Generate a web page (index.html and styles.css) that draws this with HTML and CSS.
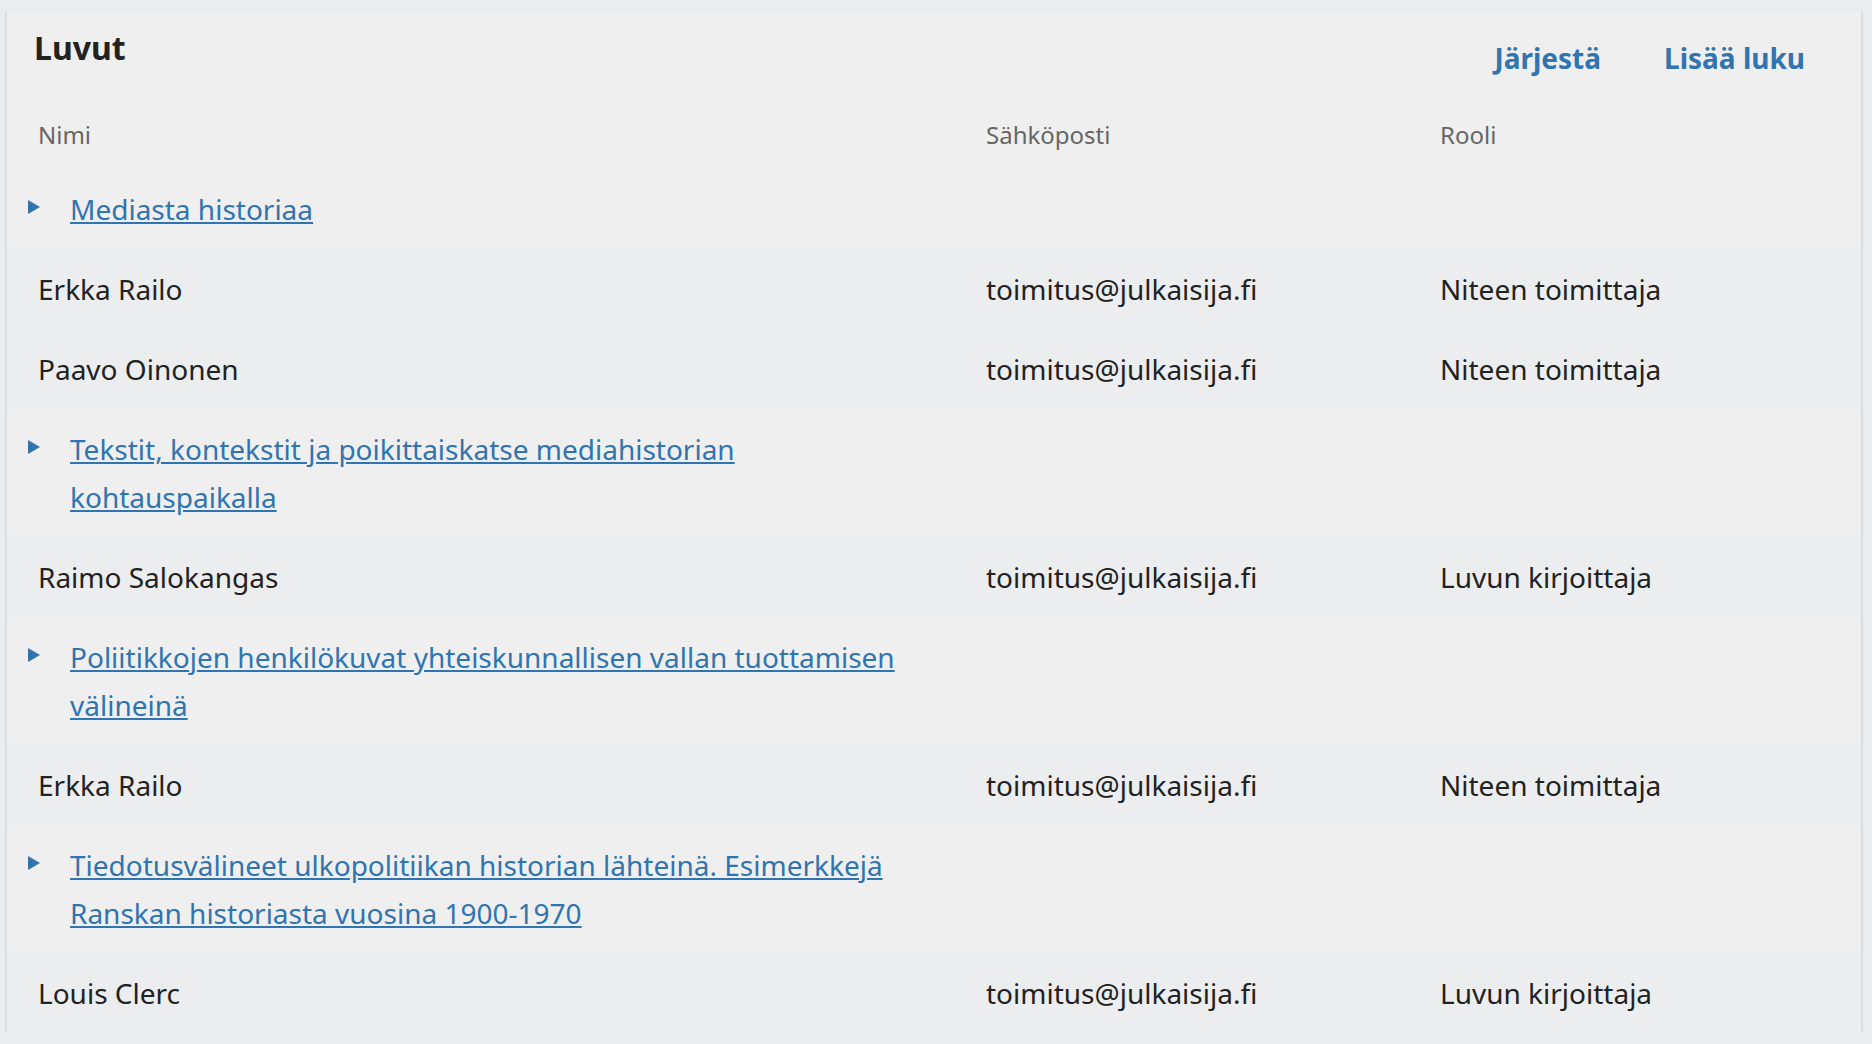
FILE: index.html
```html
<!DOCTYPE html>
<html lang="fi">
<head>
    <meta charset="UTF-8">
    <meta name="viewport" content="width=device-width, initial-scale=1.0">
    <title>Luvut</title>
    <link rel="stylesheet" href="styles.css">
</head>
<body>
    <div class="panel">
        <div class="panel-head">
            <h2 class="panel-title">Luvut</h2>
            <div class="actions">
                <a href="#">Järjestä</a>
                <a href="#">Lisää luku</a>
            </div>
        </div>
        <div class="grid">
            <div class="row head">
                <div class="cell name">Nimi</div>
                <div class="cell">Sähköposti</div>
                <div class="cell">Rooli</div>
            </div>

            <div class="row chapter">
                <div class="cell name"><span class="arrow"></span><a href="#">Mediasta historiaa</a></div>
                <div class="cell"></div>
                <div class="cell"></div>
            </div>
            <div class="row author">
                <div class="cell name">Erkka Railo</div>
                <div class="cell">toimitus@julkaisija.fi</div>
                <div class="cell">Niteen toimittaja</div>
            </div>
            <div class="row author">
                <div class="cell name">Paavo Oinonen</div>
                <div class="cell">toimitus@julkaisija.fi</div>
                <div class="cell">Niteen toimittaja</div>
            </div>

            <div class="row chapter">
                <div class="cell name"><span class="arrow"></span><a href="#">Tekstit, kontekstit ja poikittaiskatse mediahistorian kohtauspaikalla</a></div>
                <div class="cell"></div>
                <div class="cell"></div>
            </div>
            <div class="row author">
                <div class="cell name">Raimo Salokangas</div>
                <div class="cell">toimitus@julkaisija.fi</div>
                <div class="cell">Luvun kirjoittaja</div>
            </div>

            <div class="row chapter">
                <div class="cell name"><span class="arrow"></span><a href="#">Poliitikkojen henkilökuvat yhteiskunnallisen vallan tuottamisen välineinä</a></div>
                <div class="cell"></div>
                <div class="cell"></div>
            </div>
            <div class="row author">
                <div class="cell name">Erkka Railo</div>
                <div class="cell">toimitus@julkaisija.fi</div>
                <div class="cell">Niteen toimittaja</div>
            </div>

            <div class="row chapter">
                <div class="cell name"><span class="arrow"></span><a href="#">Tiedotusvälineet ulkopolitiikan historian lähteinä. Esimerkkejä Ranskan historiasta vuosina 1900-1970</a></div>
                <div class="cell"></div>
                <div class="cell"></div>
            </div>
            <div class="row author">
                <div class="cell name">Louis Clerc</div>
                <div class="cell">toimitus@julkaisija.fi</div>
                <div class="cell">Luvun kirjoittaja</div>
            </div>
        </div>
    </div>
</body>
</html>
```

FILE: styles.css
```css
body{
    margin: 0;
    padding: 11px 10px 0 6px;
    background-color: #ebecee;
    font-family: "Noto Sans", "Open Sans", sans-serif;
    font-size: 28px;
    color: #222;
}
a{
    color: #3074b0;
}
.panel{
    background-color: #efefef;
    border-left: 1px solid #dcdcdc;
    border-right: 1px solid #dcdcdc;
    border-radius: 0 0 4px 4px;
    box-shadow: 0 1px 2px rgba(0, 0, 0, .22);
}
.panel-head{
    display: flex;
    align-items: flex-start;
    padding: 17px 56px 13px 27px;
}
.panel-title{
    margin: 0;
    font-size: 32px;
    line-height: 40px;
    font-weight: 700;
}
.actions{
    display: flex;
    gap: 63px;
    margin-left: auto;
    margin-top: 6px;
}
.actions a{
    font-weight: 700;
    line-height: 48px;
    text-decoration: none;
}
.row{
    display: grid;
    grid-template-columns: 979px 454px 1fr;
    padding: 16px 0;
}
.cell{
    line-height: 48px;
}
.cell.name{
    padding-left: 31px;
}
.head{
    padding-bottom: 10px;
    font-size: 24px;
    color: #666;
}
.author{
    background-color: #ecedef;
}
.chapter .cell.name{
    display: flex;
    align-items: flex-start;
    padding-left: 21px;
    padding-right: 60px;
}
.arrow{
    flex-shrink: 0;
    width: 0;
    height: 0;
    margin-top: 15px;
    margin-right: 30px;
    border-left: 12px solid #3074b0;
    border-top: 7.5px solid transparent;
    border-bottom: 7.5px solid transparent;
}
```
